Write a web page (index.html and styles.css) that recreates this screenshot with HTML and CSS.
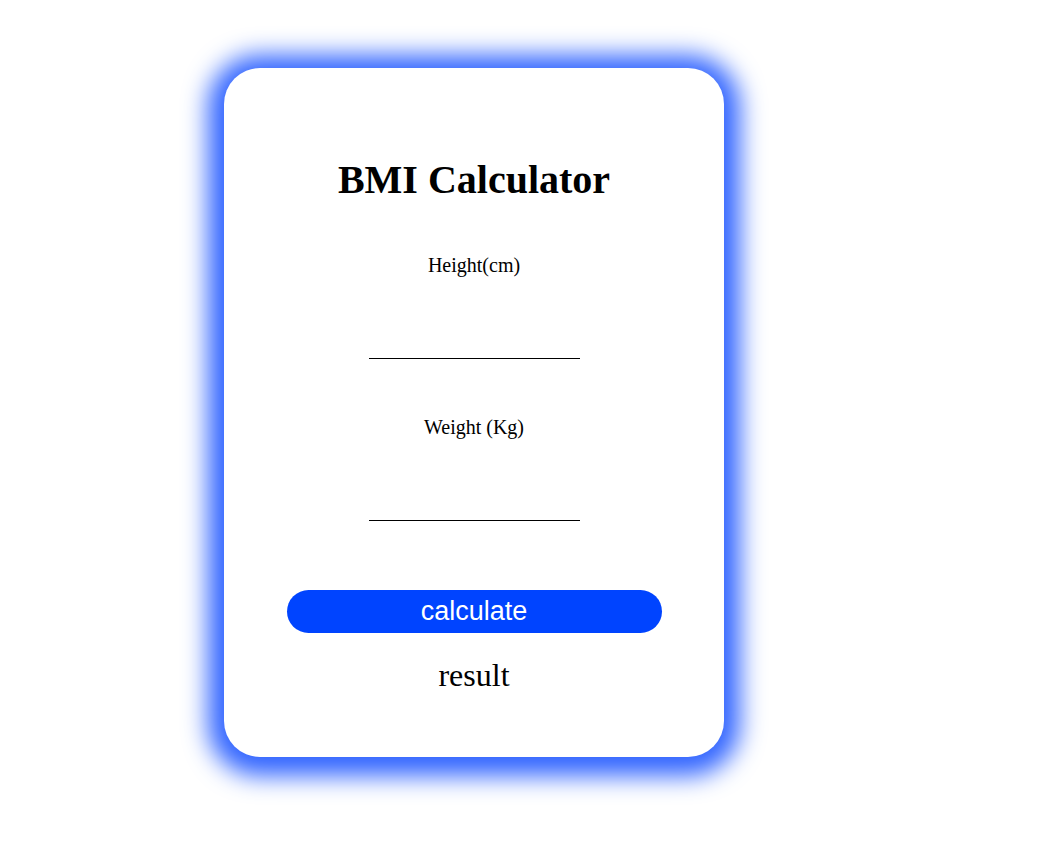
FILE: index.html
```html
<!DOCTYPE html>
<html>
<head>
<meta charset="utf-8">
<link rel="stylesheet" href="styles.css">
</head>
<body>
<div class="page">
  <div class="card">
    <h1 class="title">BMI Calculator</h1>
    <label class="label label-height" for="h">Height(cm)</label>
    <input class="field field-height" id="h" type="text">
    <label class="label label-weight" for="w">Weight (Kg)</label>
    <input class="field field-weight" id="w" type="text">
    <button class="btn" type="button">calculate</button>
    <p class="result">result</p>
  </div>
</div>
</body>
</html>
```
FILE: styles.css
```css
html, body {
  margin: 0;
  background: #ffffff;
}
.page {
  padding: 68px 0 109px 224px;
  font-family: "Liberation Serif", "Times New Roman", serif;
}
.card {
  box-sizing: border-box;
  width: 500px;
  height: 689px;
  background: #fff;
  border-radius: 36px;
  box-shadow: 0 3px 24px 16px #3366ff;
  display: flex;
  flex-direction: column;
  align-items: center;
  padding-top: 88px;
}
.title {
  margin: 0;
  font-size: 40px;
  font-weight: bold;
  line-height: normal;
  color: #000;
}
.label {
  font-size: 20px;
  line-height: 23px;
  color: #000;
}
.label-height { margin-top: 51px; }
.label-weight { margin-top: 57px; }
.field {
  box-sizing: border-box;
  width: 211px;
  height: 30px;
  border: none;
  border-bottom: 1px solid #000;
  outline: none;
  background: transparent;
  padding: 0;
  margin-top: 52px;
}
.field-weight { margin-top: 52px; }
.btn {
  margin-top: 69px;
  width: 375px;
  height: 43px;
  border: none;
  border-radius: 22px;
  background: #0044ff;
  color: #fff;
  font-family: "Liberation Sans", Arial, sans-serif;
  font-size: 27px;
  line-height: 43px;
  padding: 0;
}
.result {
  margin: 24px 0 0;
  font-size: 32px;
  line-height: normal;
  color: #000;
}
```
